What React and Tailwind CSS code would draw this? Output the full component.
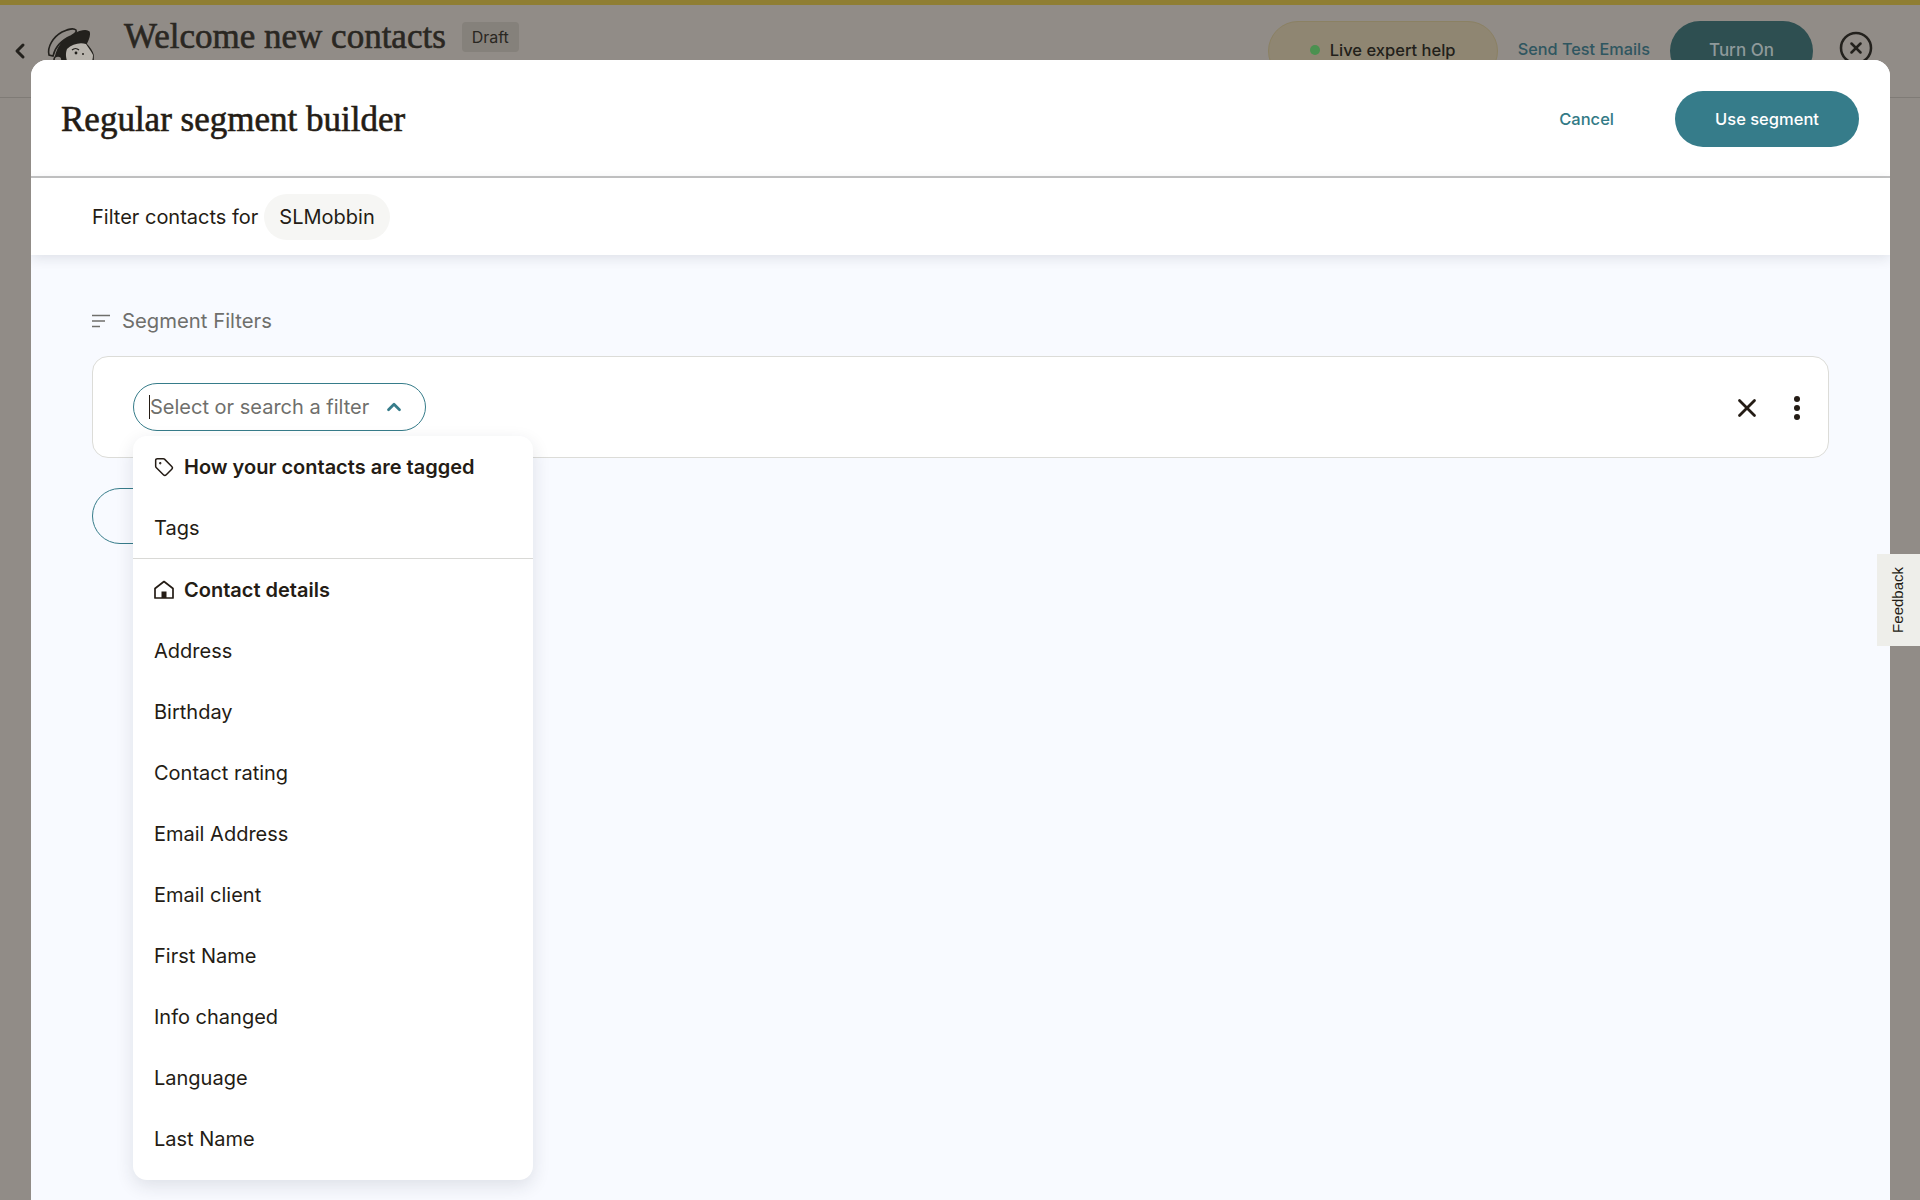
import React from "react";
import { ChevronLeft, ChevronUp, X, Tag, CircleX } from "lucide-react";

const sans = "font-['Inter','Noto_Sans',sans-serif]";
const serif = "font-['Liberation_Serif',serif]";

const items = [
  "Address",
  "Birthday",
  "Contact rating",
  "Email Address",
  "Email client",
  "First Name",
  "Info changed",
  "Language",
  "Last Name",
];

const Monkey = () => (
  <svg width="50" height="50" viewBox="0 0 50 50" fill="none" stroke="#23211d" strokeWidth="1.600">
    <path d="M10 36C11 25 17 15 27 10c6-3 14-6 17-3 1 3-1 8-3 12 3 3 6 7 7 11v10H14z" fill="#23211d" />
    <path d="M4 30C2 22 8 12 17 7c6-3 12-4 14-2 1 2-1 4-5 6C17 15 10 22 8 31z" fill="#918c87" />
    <path d="M22 24c5-5 13-7 19-5 2 3 5 7 7 11 0 3-1 7-2 10H24c-3-5-4-11-2-16z" fill="#b8b4ad" stroke="none" />
    <path d="M27 25c2-2 5-2 7 0" stroke="#23211d" strokeWidth="1.200" />
    <circle cx="31" cy="28" r="1.400" fill="#23211d" stroke="none" />
    <circle cx="38" cy="29" r="1" fill="#23211d" stroke="none" />
    <circle cx="13" cy="35" r="4" fill="#918c87" />
  </svg>
);

const SortIcon = () => (
  <svg width="18" height="14" viewBox="0 0 18 14" fill="none" stroke="#6f6f6c" strokeWidth="1.5">
    <path d="M0 1.5h18M0 7h13M0 12.5h8" />
  </svg>
);

const HomeIcon = () => (
  <svg width="20" height="20" viewBox="0 0 20 20" fill="none" stroke="#241c15" strokeWidth="1.7">
    <path d="M1 8.5 10 1.5l9 7v9.500H1z" strokeLinejoin="round" />
    <rect x="7.500" y="11.500" width="5" height="6.500" fill="#241c15" stroke="none" />
  </svg>
);

const Menu = () => (
  <div className={`absolute left-[102px] top-[181px] w-[400px] rounded-[14px] bg-white shadow-[0_6px_18px_rgba(30,40,60,0.12)] text-[20px] text-[#241c15] ${sans}`}>
    <div className="flex h-[61px] items-center gap-[10px] pl-[21px] font-semibold">
      <Tag size={20} strokeWidth={1.8} />
      <span>How your contacts are tagged</span>
    </div>
    <div className="flex h-[62px] items-center border-b border-[#d9d9d6] pl-[21px]">Tags</div>
    <div className="flex h-[61px] items-center gap-[10px] pl-[21px] font-semibold">
      <HomeIcon />
      <span>Contact details</span>
    </div>
    {items.map((item) => (
      <div key={item} className="flex h-[61px] items-center pl-[21px]">
        {item}
      </div>
    ))}
    <div className="h-[11px]" />
  </div>
);

export default function App() {
  return (
    <div className={`relative h-[1200px] overflow-hidden bg-[#918c87] ${sans}`}>
      <div className="h-[5px] bg-[#8f7e33]" />
      <div className="flex h-[93px] items-start border-b border-[#7f7b76]">
        <ChevronLeft size={24} strokeWidth={3} className="ml-[8px] mt-[34px] text-[#23211d]" />
        <div className="ml-[13px] mt-[20px]">
          <Monkey />
        </div>
        <div className={`ml-[29px] mt-[11px] text-[35px] leading-[42px] text-[#2a2722] [-webkit-text-stroke:0.6px_#2a2722] ${serif}`}>
          Welcome new contacts
        </div>
        <div className="ml-[16px] mt-[17px] flex h-[30px] w-[57px] items-center justify-center rounded-[4px] bg-[#85817b] text-[16px] text-[#2a2722]">
          Draft
        </div>
        <div className="ml-auto mt-[16px] flex h-[60px] w-[230px] items-center justify-center gap-[10px] rounded-[30px] border border-[#8b8163] bg-[#8f8672] pb-[2px] text-[16.500px] font-medium text-[#221f1a]">
          <span className="h-[10px] w-[10px] rounded-full bg-[#4b9150]" />
          Live expert help
        </div>
        <div className="ml-[20px] mt-[32px] text-[16.300px] font-medium leading-[24px] text-[#2f5660]">Send Test Emails</div>
        <div className="ml-[20px] mt-[16px] flex h-[60px] w-[143px] items-center justify-center rounded-[30px] bg-[#2e4f51] text-[17px] font-medium text-[#8f9a9b]">
          Turn On
        </div>
        <CircleX size={36} strokeWidth={1.7} className="ml-[25px] mr-[46px] mt-[25px] text-[#23211d]" />
      </div>

      <div className="absolute left-[31px] right-[30px] top-[60px] bottom-0 flex flex-col overflow-hidden rounded-t-[16px] bg-[#f8faff]">
        <div className="flex h-[118px] shrink-0 items-center border-b-2 border-[#c4c4c4] bg-white pl-[30px] pr-[31px] pt-[2px]">
          <h1 className={`text-[35px] leading-none text-[#241c15] [-webkit-text-stroke:0.6px_#241c15] ${serif}`}>
            Regular segment builder
          </h1>
          <button className="ml-auto text-[16.500px] font-medium text-[#327a86]">Cancel</button>
          <button className="ml-[61px] h-[56px] w-[184px] rounded-[28px] bg-[#367c8a] text-[16.500px] font-medium text-white">
            Use segment
          </button>
        </div>
        <div className="relative flex h-[77px] shrink-0 items-center gap-[6px] bg-white pl-[61px] text-[20px] text-[#241c15] shadow-[0_3px_12px_rgba(30,40,60,0.12)]">
          <span>Filter contacts for</span>
          <span className="flex h-[46px] items-center rounded-[23px] bg-[#f6f6f4] px-[15px]">SLMobbin</span>
        </div>

        <div className="relative flex-1 px-[61px] pt-[53px]">
          <div className="flex h-[26px] items-center gap-[12px] text-[20.300px] text-[#6f6f6c]">
            <SortIcon />
            <span>Segment Filters</span>
          </div>
          <div className="mt-[22px] flex h-[102px] w-[1737px] items-center rounded-[16px] border border-[#dcdcd8] bg-white pl-[40px] pr-[28px]">
            <div className="flex h-[48px] w-[293px] items-center rounded-[24px] border-[1.500px] border-[#367c8a] pl-[15px] text-[20px] text-[#6f6f6c]">
              <span className="h-[24px] w-px bg-[#241c15]" />
              <span>Select or search a filter</span>
              <ChevronUp size={22} strokeWidth={3} className="ml-[14px] text-[#367c8a]" />
            </div>
            <X size={30} strokeWidth={2.2} className="ml-auto mt-[2px] text-[#241c15]" />
            <div className="ml-[32px] mt-[2px] flex w-[6px] flex-col gap-[3px]">
              <span className="h-[6px] w-[6px] rounded-full bg-[#241c15]" />
              <span className="h-[6px] w-[6px] rounded-full bg-[#241c15]" />
              <span className="h-[6px] w-[6px] rounded-full bg-[#241c15]" />
            </div>
          </div>
          <div className="mt-[30px] h-[56px] w-[200px] rounded-[28px] border border-[#367c8a]" />
          <Menu />
        </div>
      </div>

      <div className="absolute right-0 top-[554px] flex h-[92px] w-[43px] items-center justify-center bg-[#eeeeea]">
        <span className="rotate-180 font-['Liberation_Sans',sans-serif] text-[15px] text-[#241c15] [writing-mode:vertical-rl]">
          Feedback
        </span>
      </div>
    </div>
  );
}
